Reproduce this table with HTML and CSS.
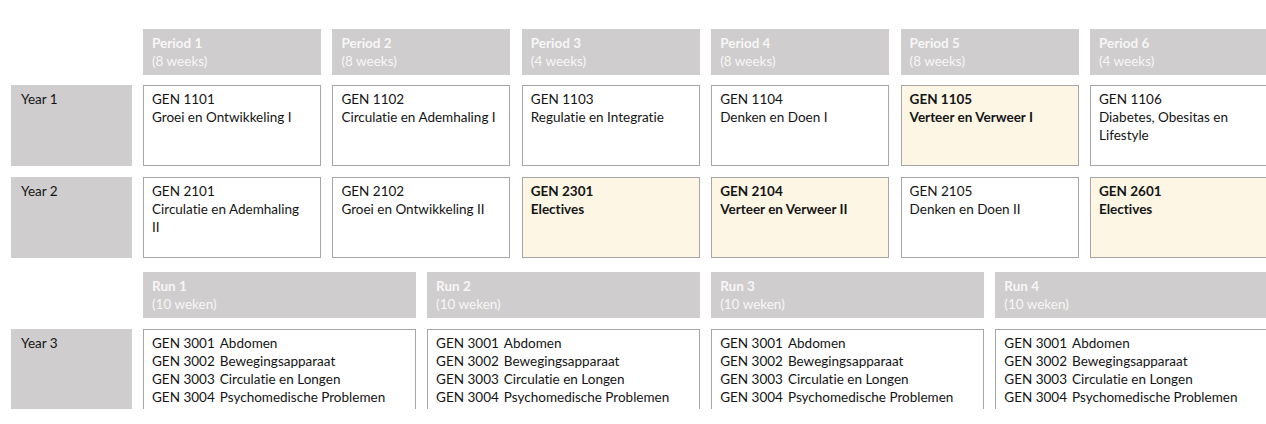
FILE: index.html
```html
<!DOCTYPE html>
<html lang="nl">
<head>
<meta charset="utf-8">
<title>Curriculum</title>
<link rel="stylesheet" href="styles.css">
</head>
<body>
<div class="schedule">
  <div class="row row-head">
    <div class="label-space"></div>
    <div class="cols six">
      <div class="head"><b>Period 1</b><span>(8 weeks)</span></div>
      <div class="head"><b>Period 2</b><span>(8 weeks)</span></div>
      <div class="head"><b>Period 3</b><span>(4 weeks)</span></div>
      <div class="head"><b>Period 4</b><span>(8 weeks)</span></div>
      <div class="head"><b>Period 5</b><span>(8 weeks)</span></div>
      <div class="head"><b>Period 6</b><span>(4 weeks)</span></div>
    </div>
  </div>

  <div class="row row-y1">
    <div class="label">Year 1</div>
    <div class="cols six">
      <div class="card"><span>GEN 1101</span><span>Groei en Ontwikkeling I</span></div>
      <div class="card"><span>GEN 1102</span><span>Circulatie en Ademhaling I</span></div>
      <div class="card"><span>GEN 1103</span><span>Regulatie en Integratie</span></div>
      <div class="card"><span>GEN 1104</span><span>Denken en Doen I</span></div>
      <div class="card hl"><span>GEN 1105</span><span>Verteer en Verweer I</span></div>
      <div class="card"><span>GEN 1106</span><span>Diabetes, Obesitas en Lifestyle</span></div>
    </div>
  </div>

  <div class="row row-y2">
    <div class="label">Year 2</div>
    <div class="cols six">
      <div class="card"><span>GEN 2101</span><span>Circulatie en Ademhaling II</span></div>
      <div class="card"><span>GEN 2102</span><span>Groei en Ontwikkeling II</span></div>
      <div class="card hl"><span>GEN 2301</span><span>Electives</span></div>
      <div class="card hl"><span>GEN 2104</span><span>Verteer en Verweer II</span></div>
      <div class="card"><span>GEN 2105</span><span>Denken en Doen II</span></div>
      <div class="card hl"><span>GEN 2601</span><span>Electives</span></div>
    </div>
  </div>

  <div class="row row-head2">
    <div class="label-space"></div>
    <div class="cols four">
      <div class="head"><b>Run 1</b><span>(10 weken)</span></div>
      <div class="head"><b>Run 2</b><span>(10 weken)</span></div>
      <div class="head"><b>Run 3</b><span>(10 weken)</span></div>
      <div class="head"><b>Run 4</b><span>(10 weken)</span></div>
    </div>
  </div>

  <div class="row row-y3">
    <div class="label">Year 3</div>
    <div class="cols four">
      <div class="card list">
        <span class="code">GEN 3001</span><span>Abdomen</span>
        <span class="code">GEN 3002</span><span>Bewegingsapparaat</span>
        <span class="code">GEN 3003</span><span>Circulatie en Longen</span>
        <span class="code">GEN 3004</span><span>Psychomedische Problemen</span>
      </div>
      <div class="card list">
        <span class="code">GEN 3001</span><span>Abdomen</span>
        <span class="code">GEN 3002</span><span>Bewegingsapparaat</span>
        <span class="code">GEN 3003</span><span>Circulatie en Longen</span>
        <span class="code">GEN 3004</span><span>Psychomedische Problemen</span>
      </div>
      <div class="card list">
        <span class="code">GEN 3001</span><span>Abdomen</span>
        <span class="code">GEN 3002</span><span>Bewegingsapparaat</span>
        <span class="code">GEN 3003</span><span>Circulatie en Longen</span>
        <span class="code">GEN 3004</span><span>Psychomedische Problemen</span>
      </div>
      <div class="card list">
        <span class="code">GEN 3001</span><span>Abdomen</span>
        <span class="code">GEN 3002</span><span>Bewegingsapparaat</span>
        <span class="code">GEN 3003</span><span>Circulatie en Longen</span>
        <span class="code">GEN 3004</span><span>Psychomedische Problemen</span>
      </div>
    </div>
  </div>
</div>
</body>
</html>
```

FILE: styles.css
```css
html, body {
  margin: 0;
  padding: 0;
  background: #ffffff;
  overflow: hidden;
}

body {
  font-family: "Lato", "Open Sans", sans-serif;
  font-size: 13.5px;
  line-height: 18px;
  color: #141414;
  font-variant-ligatures: none;
}

.schedule {
  display: flex;
  flex-direction: column;
  padding: 29px 0 0 11px;
  width: 1260px;
}

.row {
  display: flex;
  gap: 11px;
}

.row-head { height: 44px; }
.row-y1 { height: 81px; margin-top: 12px; }
.row-y2 { height: 81px; margin-top: 11px; }
.row-head2 { height: 45px; margin-top: 14px; }
.row-y3 { height: 80px; margin-top: 12px; }

.label-space,
.label {
  width: 121px;
  flex: none;
}

.label {
  background: #cfcdcd;
  padding: 5px 10px;
  box-sizing: border-box;
}

.cols {
  display: grid;
  width: 1125px;
  flex: none;
  column-gap: 11.4px;
}

.cols.six { grid-template-columns: repeat(6, 1fr); }
.cols.four { grid-template-columns: repeat(4, 1fr); }

.head {
  background: #cfcdcd;
  color: #f7f7f7;
  padding: 5px 9px;
  display: flex;
  flex-direction: column;
}

.head b { font-weight: 700; }

.card {
  background: #ffffff;
  border: 1px solid #a6a6a6;
  padding: 4px 12px 4px 8px;
  box-sizing: border-box;
  display: flex;
  flex-direction: column;
}

.card.hl {
  background: #fdf6e4;
  font-weight: 700;
}

.card.list {
  display: grid;
  grid-template-columns: max-content 1fr;
  column-gap: 5px;
  align-content: start;
  white-space: nowrap;
}
```
